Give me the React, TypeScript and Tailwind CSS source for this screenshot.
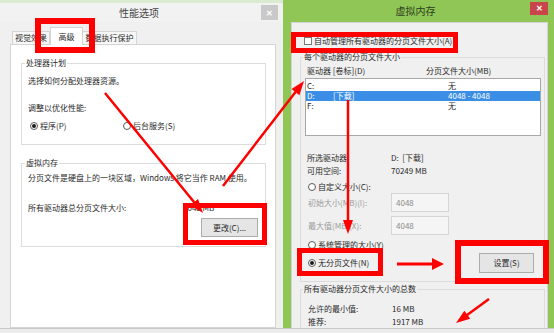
import React from "react";

function Arrow({ x1, y1, x2, y2, w = 2.5, hl = 14, hw = 5 }: { x1: number; y1: number; x2: number; y2: number; w?: number; hl?: number; hw?: number }) {
  const dx = x2 - x1;
  const dy = y2 - y1;
  const L = Math.hypot(dx, dy);
  const ux = dx / L;
  const uy = dy / L;
  const bx = x2 - ux * hl;
  const by = y2 - uy * hl;
  const px = -uy * hw;
  const py = ux * hw;
  return (
    <g>
      <line x1={x1} y1={y1} x2={bx + ux * 2} y2={by + uy * 2} stroke="#f00" strokeWidth={w} />
      <polygon points={`${x2},${y2} ${bx + px},${by + py} ${bx - px},${by - py}`} fill="#f00" />
    </g>
  );
}

function Radio({ checked = false }: { checked?: boolean }) {
  return (
    <span className="flex h-[8px] w-[8px] shrink-0 items-center justify-center rounded-full border border-[#5a5a5a] bg-white">
      {checked && <span className="h-[4px] w-[4px] rounded-full bg-[#1a1a1a]" />}
    </span>
  );
}

function LeftDialog() {
  return (
    <div className="flex w-[283px] flex-col bg-[#ebebeb]">
      <div className="flex h-[22px] items-center border-t-[3px] border-[#d9ebd0] bg-[#f2f2f2]">
        <div className="flex-1" />
        <span className="text-[10px] leading-[12px] text-[#444]">性能选项</span>
        <div className="flex flex-1 justify-end pr-[5px]">
          <div className="flex h-[15px] w-[17px] items-center justify-center bg-[#c9c9c9] text-[8px] font-bold text-white">✕</div>
        </div>
      </div>
      <div className="flex flex-1 flex-col bg-[#f0f0f0] pl-[10px] pr-[7px] pt-[5px]">
        <div className="ml-[2px] flex h-[17px] items-end">
          <div className="flex h-[13px] w-[38px] items-center justify-center border border-b-0 border-[#d5d5d5] bg-[#f7f7f7]">视觉效果</div>
          <div className="relative z-10 -mb-px flex h-[18px] w-[33px] items-center justify-center border border-b-0 border-[#d5d5d5] bg-white">高级</div>
          <div className="flex h-[13px] w-[54px] items-center justify-center border border-b-0 border-l-0 border-[#d5d5d5] bg-[#f7f7f7]">数据执行保护</div>
        </div>
        <div className="flex-1 border border-[#d5d5d5] bg-white pl-[10px] pr-[9px]">
          <fieldset className="mt-[13px] border border-[#dcdcdc] px-[6px] pb-[13px]">
            <legend className="-ml-[3px] px-[1px] leading-[10px]">处理器计划</legend>
            <p className="mt-[8px] h-[10px]">选择如何分配处理器资源。</p>
            <p className="mt-[17px] h-[10px]">调整以优化性能:</p>
            <div className="mt-[8px] flex h-[10px] items-center">
              <div className="flex w-[95px] items-center">
                <span className="ml-[2px]"><Radio checked /></span>
                <span className="ml-[2px]">程序(P)</span>
              </div>
              <Radio />
              <span className="ml-[2px]">后台服务(S)</span>
            </div>
          </fieldset>
          <fieldset className="mt-[13px] border border-[#dcdcdc] px-[6px] pb-[9px]">
            <legend className="-ml-[3px] px-[1px] leading-[10px]">虚拟内存</legend>
            <p className="mt-[5px] h-[10px] whitespace-nowrap">分页文件是硬盘上的一块区域，Windows 将它当作 RAM 使用。</p>
            <div className="mt-[20px] flex h-[10px] items-center">
              <span className="w-[155px]">所有驱动器总分页文件大小:</span>
              <span>4048 MB</span>
            </div>
            <div className="mt-[5px] flex justify-end">
              <div className="mr-[1px] flex h-[19px] w-[57px] items-center justify-center border border-[#acacac] bg-[#e5e5e5]">更改(C)...</div>
            </div>
          </fieldset>
        </div>
      </div>
    </div>
  );
}

function RightDialog() {
  return (
    <div className="flex w-[271px] flex-col bg-[#8fc655]">
      <div className="flex h-[22px] items-center">
        <div className="flex-1" />
        <span className="text-[10px] leading-[12px] text-[#2f3d22]">虚拟内存</span>
        <div className="flex flex-1 justify-end pr-[6px]">
          <div className="mb-[6px] flex h-[13px] w-[18px] items-center justify-center bg-[#c8464b] text-[8px] font-bold text-white">✕</div>
        </div>
      </div>
      <div className="ml-[8px] mr-[6px] flex-1 overflow-hidden border border-b-0 border-[#d4d4d4] bg-[#f0f0f0] pl-[8px] pr-[2px] pt-[13px]">
        <div className="ml-[4px] flex h-[10px] items-center">
          <span className="h-[8px] w-[8px] border border-[#777] bg-white" />
          <span className="ml-[2px]">自动管理所有驱动器的分页文件大小(A)</span>
        </div>
        <fieldset className="mt-[6px] border border-[#dcdcdc] pb-[8px] pl-[6px] pr-[3px]">
          <legend className="-ml-[4px] px-[1px] leading-[10px]">每个驱动器的分页文件大小</legend>
          <div className="mt-[4px] flex h-[10px] items-center">
            <span className="w-[119px]">驱动器 [卷标](D)</span>
            <span>分页文件大小(MB)</span>
          </div>
          <div className="-ml-[2px] mt-[2px] h-[58px] border border-[#a8a8a8] bg-white pt-[2px]">
            <div className="flex h-[10px] items-center pl-[1px]">
              <span className="w-[141px]">C:</span>
              <span>无</span>
            </div>
            <div className="flex h-[10px] items-center bg-[#3b8ee6] pl-[1px] text-white">
              <span className="w-[26px]">D:</span>
              <span className="w-[115px]">[下载]</span>
              <span>4048 - 4048</span>
            </div>
            <div className="flex h-[10px] items-center pl-[1px]">
              <span className="w-[141px]">F:</span>
              <span>无</span>
            </div>
          </div>
          <div className="mt-[15px] flex h-[13px] items-center">
            <span className="w-[84px]">所选驱动器</span>
            <span>D:&nbsp;&nbsp;[下载]</span>
          </div>
          <div className="flex h-[13px] items-center">
            <span className="w-[84px]">可用空间:</span>
            <span>70249 MB</span>
          </div>
          <div className="ml-[1px] mt-[4px] flex h-[12px] items-center">
            <Radio />
            <span className="ml-[2px]">自定义大小(C):</span>
          </div>
          <div className="ml-[1px] flex h-[19px] items-center">
            <span className="w-[83px] text-[#9c9c9c]">初始大小(MB)(I):</span>
            <div className="flex h-[19px] w-[58px] items-center border border-[#d5d5d5] bg-[#f5f5f5] pl-[4px] text-[#8a8a8a]">4048</div>
          </div>
          <div className="ml-[1px] mt-[4px] flex h-[19px] items-center">
            <span className="w-[83px] text-[#9c9c9c]">最大值(MB)(X):</span>
            <div className="flex h-[19px] w-[58px] items-center border border-[#d5d5d5] bg-[#f5f5f5] pl-[4px] text-[#8a8a8a]">4048</div>
          </div>
          <div className="ml-[1px] mt-[4px] flex h-[12px] items-center">
            <Radio />
            <span className="ml-[2px]">系统管理的大小(Y)</span>
          </div>
          <div className="ml-[1px] mt-[2px] flex h-[20px] items-center justify-between">
            <div className="flex items-center">
              <Radio checked />
              <span className="ml-[2px]">无分页文件(N)</span>
            </div>
            <div className="mr-[7px] flex h-[20px] w-[55px] items-center justify-center border border-[#acacac] bg-[#e5e5e5]">设置(S)</div>
          </div>
        </fieldset>
        <fieldset className="mt-[2px] h-[80px] border border-[#dcdcdc] pl-[6px] pr-[3px]">
          <legend className="-ml-[4px] px-[1px] leading-[10px]">所有驱动器分页文件大小的总数</legend>
          <div className="ml-[1px] mt-[8px] flex h-[13px] items-center">
            <span className="w-[84px]">允许的最小值:</span>
            <span>16 MB</span>
          </div>
          <div className="ml-[1px] flex h-[13px] items-center">
            <span className="w-[84px]">推荐:</span>
            <span>1917 MB</span>
          </div>
        </fieldset>
      </div>
    </div>
  );
}

export default function App() {
  return (
    <div className="relative flex h-[333px] w-[554px] flex-col overflow-hidden bg-[#f0f0f0] font-['Noto_Sans_CJK_SC','Noto_Sans',sans-serif] text-[8px] leading-[10px] text-[#2a2a2a]">
      <div className="flex h-[328px]">
        <LeftDialog />
        <RightDialog />
      </div>
      <div className="flex-1 border-t border-[#c8c8c8] bg-[#ececec]" />
      <svg className="pointer-events-none absolute left-0 top-0" width="554" height="333" viewBox="0 0 554 333">
        <g fill="none" stroke="#f00">
          <rect x="38" y="21" width="54" height="29" strokeWidth="6" />
          <rect x="185.5" y="205.5" width="79" height="37" strokeWidth="5" />
          <rect x="293.5" y="34.5" width="162" height="16" strokeWidth="5" />
          <rect x="299.5" y="250.5" width="81" height="23" strokeWidth="5" />
          <rect x="458" y="243" width="88" height="38" strokeWidth="6" />
        </g>
        <Arrow x1={105} y1={93} x2={203} y2={213} />
        <Arrow x1={223} y1={186} x2={304} y2={81} />
        <Arrow x1={348} y1={100} x2={348} y2={234} />
        <Arrow x1={397} y1={264} x2={444} y2={264} w={3} hl={12} hw={6} />
        <Arrow x1={489} y1={299} x2={456} y2={323} />
      </svg>
    </div>
  );
}
